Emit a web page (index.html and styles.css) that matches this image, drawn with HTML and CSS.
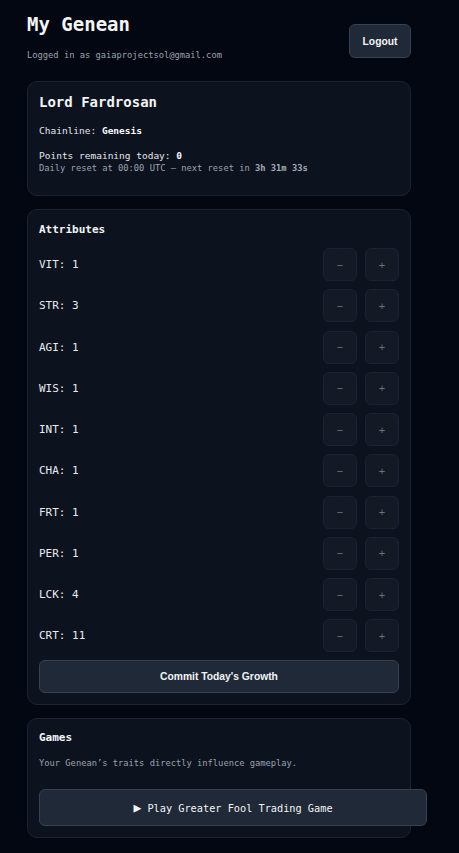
FILE: index.html
```html
<!DOCTYPE html>
<html>
<head>
<meta charset="utf-8">
<link rel="stylesheet" href="styles.css">
</head>
<body>
<div class="page">
  <header class="header">
    <div class="who">
      <h1 class="title">My Genean</h1>
      <p class="logged">Logged in as gaiaprojectsol@gmail.com</p>
    </div>
    <button class="btn logout">Logout</button>
  </header>

  <section class="card info">
    <h2 class="name">Lord Fardrosan</h2>
    <p class="chain">Chainline: <b>Genesis</b></p>
    <p class="points">Points remaining today: <b>0</b></p>
    <p class="reset">Daily reset at 00:00 UTC — next reset in <b>3h 31m 33s</b></p>
  </section>

  <section class="card attrs">
    <h3 class="sec-title">Attributes</h3>
    <div class="rows">
      <div class="row"><span class="lbl">VIT: 1</span><div class="ctrls"><button class="sq">−</button><button class="sq">+</button></div></div>
      <div class="row"><span class="lbl">STR: 3</span><div class="ctrls"><button class="sq">−</button><button class="sq">+</button></div></div>
      <div class="row"><span class="lbl">AGI: 1</span><div class="ctrls"><button class="sq">−</button><button class="sq">+</button></div></div>
      <div class="row"><span class="lbl">WIS: 1</span><div class="ctrls"><button class="sq">−</button><button class="sq">+</button></div></div>
      <div class="row"><span class="lbl">INT: 1</span><div class="ctrls"><button class="sq">−</button><button class="sq">+</button></div></div>
      <div class="row"><span class="lbl">CHA: 1</span><div class="ctrls"><button class="sq">−</button><button class="sq">+</button></div></div>
      <div class="row"><span class="lbl">FRT: 1</span><div class="ctrls"><button class="sq">−</button><button class="sq">+</button></div></div>
      <div class="row"><span class="lbl">PER: 1</span><div class="ctrls"><button class="sq">−</button><button class="sq">+</button></div></div>
      <div class="row"><span class="lbl">LCK: 4</span><div class="ctrls"><button class="sq">−</button><button class="sq">+</button></div></div>
      <div class="row"><span class="lbl">CRT: 11</span><div class="ctrls"><button class="sq">−</button><button class="sq">+</button></div></div>
    </div>
    <button class="btn commit">Commit Today's Growth</button>
  </section>

  <section class="card games">
    <h3 class="sec-title">Games</h3>
    <p class="games-text">Your Genean’s traits directly influence gameplay.</p>
    <button class="btn play"><span class="tri">▶</span> Play Greater Fool Trading Game</button>
  </section>
</div>
</body>
</html>
```

FILE: styles.css
```css
html, body {
  margin: 0;
  padding: 0;
  background: #030712;
}
body {
  font-family: "DejaVu Sans Mono", "Liberation Mono", monospace;
  color: #e5e7eb;
}
.page {
  width: 384px;
  margin-left: 27px;
  padding-top: 12px;
  padding-bottom: 20px;
}
.header {
  display: flex;
  justify-content: space-between;
  align-items: flex-start;
  margin-bottom: 20px;
}
.title {
  margin: 0;
  font-size: 19px;
  line-height: 24px;
  font-weight: bold;
  color: #f3f4f6;
}
.logged {
  margin: 13px 0 0;
  font-size: 8.75px;
  line-height: 12px;
  color: #9ca3af;
}
.btn {
  font-family: "Liberation Sans", Arial, sans-serif;
  font-weight: bold;
  color: #f3f4f6;
  background: #1f2937;
  border: 1px solid #374151;
  border-radius: 6px;
  cursor: pointer;
}
.logout {
  margin-top: 12px;
  height: 34px;
  width: 62px;
  font-size: 10.3px;
  padding: 0;
}
.card {
  background: #0c121e;
  border: 1px solid #1c2330;
  border-radius: 10px;
  padding: 11px 11px;
  margin-bottom: 13px;
}
.info { padding-bottom: 21px; padding-top: 12px; }
.name {
  margin: 0;
  font-size: 14px;
  line-height: 16px;
  font-weight: bold;
  color: #f3f4f6;
}
.chain {
  margin: 14px 0 0;
  font-size: 9.5px;
  line-height: 13px;
  color: #e5e7eb;
}
.chain b, .points b { color: #f9fafb; }
.points {
  margin: 12px 0 0;
  font-size: 9.5px;
  line-height: 13px;
}
.reset {
  margin: 0;
  font-size: 8.75px;
  line-height: 12px;
  color: #9ca3af;
}
.reset b { color: #a3aab5; }
.attrs { padding-top: 13px; }
.sec-title {
  margin: 0;
  font-size: 11px;
  line-height: 14px;
  font-weight: bold;
  color: #f3f4f6;
}
.rows {
  margin-top: 11px;
  display: flex;
  flex-direction: column;
  gap: 8.25px;
}
.row {
  display: flex;
  justify-content: space-between;
  align-items: center;
}
.lbl {
  font-size: 11px;
  color: #e8ebf0;
}
.ctrls {
  display: flex;
  gap: 8px;
}
.sq {
  width: 34px;
  height: 33px;
  background: #131a26;
  border: 1px solid #1c2330;
  border-radius: 6px;
  color: #6b7280;
  font-family: "Liberation Sans", Arial, sans-serif;
  font-size: 11px;
  padding: 0;
}
.commit {
  display: block;
  width: 100%;
  height: 33px;
  margin-top: 8px;
  font-size: 10.3px;
}
.games { padding-top: 12px; padding-bottom: 11px; }
.games-text {
  margin: 12px 0 0;
  font-size: 8.75px;
  line-height: 12px;
  color: #9ca3af;
}
.play {
  display: block;
  box-sizing: content-box;
  width: 100%;
  height: 35px;
  padding: 0 13px;
  margin-top: 20px;
  font-family: "DejaVu Sans Mono", "Liberation Mono", monospace;
  font-weight: normal;
  font-size: 10.25px;
  color: #f3f4f6;
}
.tri {
  font-size: 13px;
  line-height: 10px;
}
```
